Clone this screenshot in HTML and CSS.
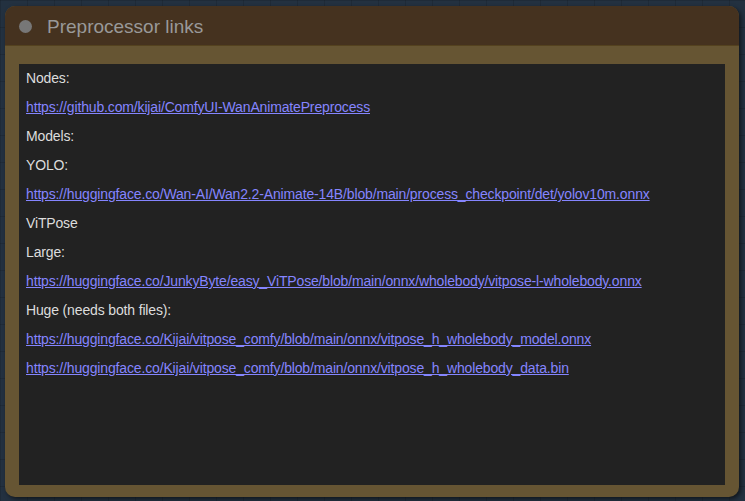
FILE: index.html
```html
<!DOCTYPE html>
<html lang="en">
<head>
    <meta charset="UTF-8">
    <title>Preprocessor links</title>
    <link rel="stylesheet" href="styles.css">
</head>
<body>
    <div class="canvas">
        <div class="node">
            <div class="node-title">
                <span class="node-dot"></span>
                <span class="node-name">Preprocessor links</span>
            </div>
            <div class="node-body">
                <div class="note">
                    <p>Nodes:</p>
                    <p><a href="#">https://github.com/kijai/ComfyUI-WanAnimatePreprocess</a></p>
                    <p>Models:</p>
                    <p>YOLO:</p>
                    <p><a href="#">https://huggingface.co/Wan-AI/Wan2.2-Animate-14B/blob/main/process_checkpoint/det/yolov10m.onnx</a></p>
                    <p>ViTPose</p>
                    <p>Large:</p>
                    <p><a href="#">https://huggingface.co/JunkyByte/easy_ViTPose/blob/main/onnx/wholebody/vitpose-l-wholebody.onnx</a></p>
                    <p>Huge (needs both files):</p>
                    <p><a href="#">https://huggingface.co/Kijai/vitpose_comfy/blob/main/onnx/vitpose_h_wholebody_model.onnx</a></p>
                    <p><a href="#">https://huggingface.co/Kijai/vitpose_comfy/blob/main/onnx/vitpose_h_wholebody_data.bin</a></p>
                </div>
            </div>
        </div>
    </div>
</body>
</html>
```

FILE: styles.css
```css
/* canvas background with grid */
html, body {
    margin: 0;
    height: 100%;
}
body {
    background-color: #233140;
    background-image:
        linear-gradient(rgba(0,0,0,0.12) 1px, transparent 1px),
        linear-gradient(90deg, rgba(0,0,0,0.12) 1px, transparent 1px);
    background-size: 27px 27px;
    font-family: "Liberation Sans", Arial, sans-serif;
    overflow: hidden;
}
.canvas {
    padding: 6px 6px 4px 5px;
    height: 100%;
    box-sizing: border-box;
}

/* the node */
.node {
    height: 491px;
    display: flex;
    flex-direction: column;
    border-radius: 10px;
    background: #665533;
    box-shadow: 2px 2px 4px rgba(0,0,0,0.55);
    overflow: hidden;
}
.node-title {
    height: 40px;
    box-sizing: border-box;
    padding-top: 2px;
    flex: none;
    display: flex;
    align-items: center;
    background: #45321f;
    border-bottom: 1px solid #54421f;
}
.node-dot {
    width: 13px;
    height: 13px;
    border-radius: 50%;
    background: #777;
    margin-left: 14px;
}
.node-name {
    margin-left: 15px;
    color: #999;
    font-size: 19px;
}

/* body + note area */
.node-body {
    flex: 1;
    padding: 18px 14px 12px;
    display: flex;
    min-height: 0;
}
.note {
    flex: 1;
    background: #222;
    padding: 7px;
    color: #ddd;
    font-size: 14px;
    line-height: 15px;
    letter-spacing: -0.15px;
    overflow: hidden;
}
.note p {
    margin: 0 0 14px;
    white-space: nowrap;
}
.note a {
    color: #8585ff;
    text-decoration: underline;
}
```
